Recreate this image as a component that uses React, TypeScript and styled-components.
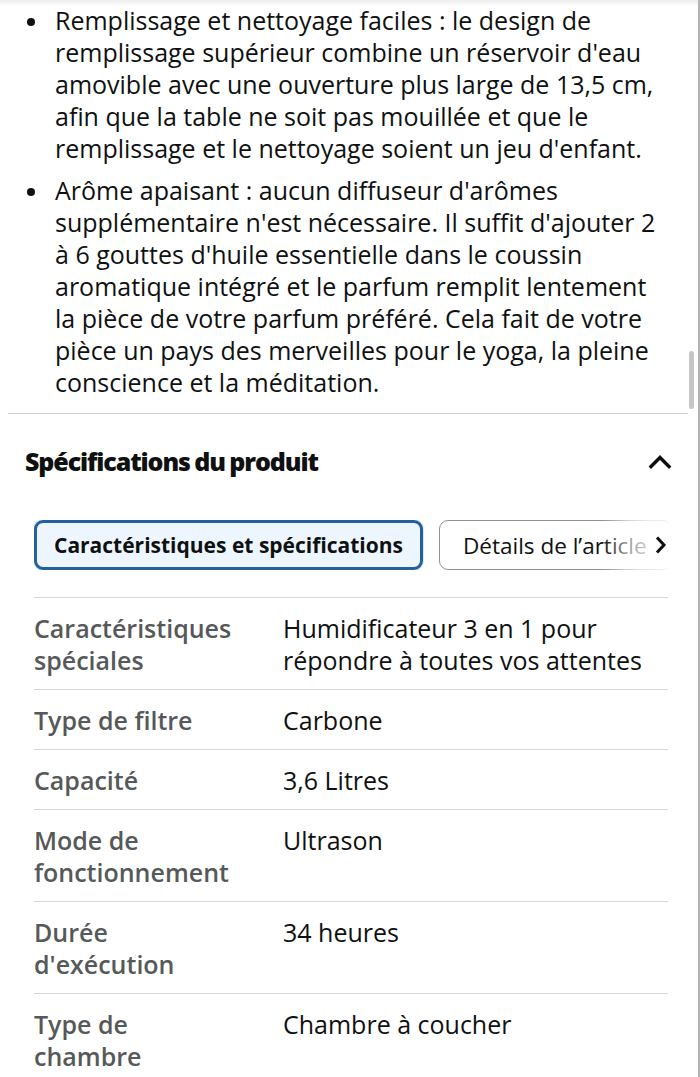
import React from "react";
import styled, { createGlobalStyle } from "styled-components";

const Global = createGlobalStyle`
  html, body { margin: 0; padding: 0; background: #ffffff; }
  body { font-family: "Open Sans", "Noto Sans", Arial, sans-serif; color: #0f1111; }
  * { box-sizing: border-box; }
`;

const Page = styled.div`
  position: relative;
  width: 700px;
  min-height: 1077px;
  overflow: hidden;
  background: #ffffff;
  border-right: 2px solid #b4b4b4;
`;

const TopShade = styled.div`
  position: absolute;
  left: 0;
  right: 0;
  top: 0;
  height: 6px;
  background: linear-gradient(#ececec, rgba(255, 255, 255, 0));
  pointer-events: none;
`;

const ScrollThumb = styled.div`
  position: absolute;
  left: 689px;
  top: 351px;
  width: 5px;
  height: 58px;
  border-radius: 3px;
  background: #c6c6c6;
`;

const BulletList = styled.ul`
  list-style: none;
  margin: 0;
  padding: 4px 28px 0 27px;
  display: flex;
  flex-direction: column;
  gap: 10px;
`;

const BulletItem = styled.li`
  display: flex;
  align-items: flex-start;
  font-size: 25px;
  line-height: 32px;
  color: #0f1111;
`;

const Dot = styled.span`
  flex: none;
  width: 8px;
  height: 8px;
  margin-top: 14px;
  margin-right: 20px;
  border-radius: 50%;
  background: #0f1111;
`;

const Divider = styled.hr`
  margin: 15px 10px 0 8px;
  border: 0;
  border-top: 1px solid #cfcfcf;
`;

const Section = styled.section`
  padding: 0 30px 0 34px;
`;

const HeadRow = styled.div`
  display: flex;
  align-items: center;
  justify-content: space-between;
  padding: 31px 0 0 0;
  margin-left: -9px;
  margin-right: -4px;
`;

const Heading = styled.h2`
  margin: 0;
  font-size: 25px;
  line-height: 32px;
  font-weight: 800;
  letter-spacing: -1.1px;
  word-spacing: -1px;
  color: #0f1111;
`;

const TabsViewport = styled.div`
  position: relative;
  margin-top: 43px;
  display: flex;
  gap: 16px;
  overflow: hidden;
`;

const Tab = styled.div<{ $active?: boolean }>`
  flex: none;
  height: 50px;
  display: flex;
  align-items: center;
  border-radius: 9px;
  white-space: nowrap;
  color: #0f1111;
  border: ${(p) => (p.$active ? "3px solid #23619c" : "1px solid #8f9292")};
  background: ${(p) => (p.$active ? "#edf6fe" : "#ffffff")};
  font-weight: ${(p) => (p.$active ? 700 : 400)};
  font-size: ${(p) => (p.$active ? "21px" : "22.5px")};
  padding: ${(p) => (p.$active ? "0 17px" : "0 24px 0 23px")};
  box-shadow: ${(p) => (p.$active ? "0 0 0 1px #dbe8f4" : "none")};
`;

const TabFade = styled.div`
  position: absolute;
  right: 0;
  top: 0;
  bottom: 0;
  width: 66px;
  display: flex;
  align-items: center;
  justify-content: flex-end;
  padding-right: 1px;
  background: linear-gradient(
    to right,
    rgba(255, 255, 255, 0) 0%,
    rgba(255, 255, 255, 0.6) 40%,
    rgba(255, 255, 255, 0.8) 70%,
    rgba(255, 255, 255, 0.85) 100%
  );
`;

const Table = styled.div`
  margin-top: 27px;
  border-top: 1px solid #d5d9d9;
`;

const Row = styled.div`
  display: grid;
  grid-template-columns: 249px 1fr;
  padding: 14px 0 13px 0;
  border-bottom: 1px solid #d5d9d9;
  font-size: 25px;
  line-height: 32px;
`;

const Label = styled.div`
  font-weight: 600;
  color: #565959;
  max-width: 206px;
`;

const Value = styled.div`
  color: #0f1111;
`;

const ChevronUp = () => (
  <svg width="24" height="16" viewBox="0 0 24 16" fill="none">
    <polyline
      points="3,13.5 12,4.5 21,13.5"
      stroke="#0f1111"
      strokeWidth="3.4"
      strokeLinecap="square"
      strokeLinejoin="miter"
    />
  </svg>
);

const ChevronRight = () => (
  <svg width="12" height="18" viewBox="0 0 12 18" fill="none">
    <polyline
      points="3,2.5 9,9 3,15.5"
      stroke="#0f1111"
      strokeWidth="3"
      strokeLinecap="square"
    />
  </svg>
);

const bullets = [
  "Remplissage et nettoyage faciles : le design de remplissage supérieur combine un réservoir d'eau amovible avec une ouverture plus large de 13,5 cm, afin que la table ne soit pas mouillée et que le remplissage et le nettoyage soient un jeu d'enfant.",
  "Arôme apaisant : aucun diffuseur d'arômes supplémentaire n'est nécessaire. Il suffit d'ajouter 2 à 6 gouttes d'huile essentielle dans le coussin aromatique intégré et le parfum remplit lentement la pièce de votre parfum préféré. Cela fait de votre pièce un pays des merveilles pour le yoga, la pleine conscience et la méditation.",
];

const specs: [string, string][] = [
  ["Caractéristiques spéciales", "Humidificateur 3 en 1 pour répondre à toutes vos attentes"],
  ["Type de filtre", "Carbone"],
  ["Capacité", "3,6 Litres"],
  ["Mode de fonctionnement", "Ultrason"],
  ["Durée d'exécution", "34 heures"],
  ["Type de chambre", "Chambre à coucher"],
];

export default function App() {
  return (
    <Page>
      <Global />
      <TopShade />
      <ScrollThumb />
      <BulletList>
        {bullets.map((b) => (
          <BulletItem key={b}>
            <Dot />
            <span>{b}</span>
          </BulletItem>
        ))}
      </BulletList>
      <Divider />
      <Section>
        <HeadRow>
          <Heading>Spécifications du produit</Heading>
          <ChevronUp />
        </HeadRow>
        <TabsViewport>
          <Tab $active>Caractéristiques et spécifications</Tab>
          <Tab>Détails de l’article</Tab>
          <TabFade>
            <ChevronRight />
          </TabFade>
        </TabsViewport>
        <Table>
          {specs.map(([k, v]) => (
            <Row key={k}>
              <Label>{k}</Label>
              <Value>{v}</Value>
            </Row>
          ))}
        </Table>
      </Section>
    </Page>
  );
}
